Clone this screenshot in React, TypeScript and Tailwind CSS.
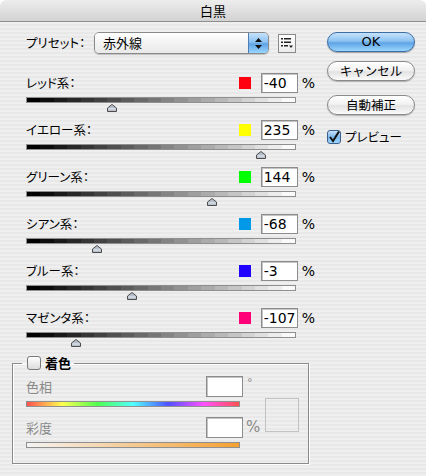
import React from 'react';

const jp = "font-['Noto_Sans_CJK_JP','Noto_Sans',sans-serif]";
const num = "font-['DejaVu_Sans','Noto_Sans_CJK_JP',sans-serif]";

const channels = [
  { label: 'レッド系：', color: 'bg-[#ff0010]', value: -40 },
  { label: 'イエロー系：', color: 'bg-[#ffff00]', value: 235 },
  { label: 'グリーン系：', color: 'bg-[#00ff00]', value: 144 },
  { label: 'シアン系：', color: 'bg-[#0099e8]', value: -68 },
  { label: 'ブルー系：', color: 'bg-[#2000ff]', value: -3 },
  { label: 'マゼンタ系：', color: 'bg-[#ff0078]', value: -107 },
];

const steps = Array.from({ length: 20 }, (_, i) => {
  const g = Math.round((i * 250) / 19);
  return `rgb(${g},${g},${g})`;
});

const Thumb = ({ left }: { left: number }) => (
  <svg
    width="10"
    height="8"
    viewBox="0 0 10 8"
    className="absolute top-[7px]"
    style={{ left }}
  >
    <path d="M5 0.5 L9.5 4 L9.5 7.5 L0.5 7.5 L0.5 4 Z" fill="#b7bfcb" stroke="#4d4d4d" strokeWidth="1" />
    <path d="M1.5 5 L8.5 5" stroke="#e8ecf2" strokeWidth="1" />
  </svg>
);

const ChannelRow = ({ label, color, value }: { label: string; color: string; value: number }) => {
  const center = ((value + 200) / 500) * 270;
  return (
    <div className="h-[47px] flex flex-col">
      <div className="h-[20px] flex items-center">
        <span className={`flex-1 text-[12.5px] text-black ${jp} [font-feature-settings:'palt']`}>{label}</span>
        <div className={`w-[12px] h-[12px] ${color}`} />
        <div
          className={`ml-[10px] w-[37px] h-[20px] bg-white border border-[#8c8c8c] shadow-[inset_1px_1px_0_#c4c4c4] flex items-center pl-[2px] text-[14px] text-black ${num}`}
        >
          {value}
        </div>
        <span className={`ml-[4px] text-[14px] text-black ${num}`}>%</span>
      </div>
      <div className="relative mt-[4px] w-[270px]">
        <div className="h-[6px] border border-[#8f8f8f] flex">
          {steps.map((c, i) => (
            <div key={i} className="flex-1" style={{ background: c }} />
          ))}
        </div>
        <Thumb left={center - 5} />
      </div>
    </div>
  );
};

const AquaButton = ({ children, primary }: { children: React.ReactNode; primary?: boolean }) => (
  <div
    className={
      primary
        ? `w-[88px] h-[20px] rounded-full border border-[#3c6ea6] bg-[linear-gradient(180deg,#c6e2fb_0%,#8cc2f2_45%,#5ea3e4_55%,#9ad6ff_100%)] shadow-[0_1px_1px_rgba(0,0,0,0.3)] flex items-center justify-center text-[13px] text-black ${num}`
        : `w-[88px] h-[20px] rounded-full border border-[#8a8a8a] bg-[linear-gradient(180deg,#ffffff_0%,#f2f2f2_45%,#e2e2e2_55%,#fbfbfb_100%)] shadow-[0_1px_1px_rgba(0,0,0,0.25)] flex items-center justify-center text-[12.5px] text-black ${jp}`
    }
  >
    {children}
  </div>
);

export default function App() {
  return (
    <div className="w-[426px] h-[476px] bg-white flex flex-col overflow-hidden">
      <div className="h-[22px] rounded-t-[6px] border-b border-[#8e8e8e] bg-[linear-gradient(180deg,#ededed_0%,#e0e0e0_50%,#d2d2d2_100%)] flex items-center justify-center">
        <span className={`text-[13px] text-black ${jp}`}>白黒</span>
      </div>
      <div className="flex-1 flex bg-[repeating-linear-gradient(180deg,#efefef_0px,#efefef_2px,#e8e8e8_2px,#e8e8e8_4px)]">
        <div className="w-[315px] pl-[12px] flex flex-col">
          <div className="pl-[14px]">
            <div className="mt-[10px] h-[22px] flex items-center">
              <span className={`w-[68px] text-[12.5px] text-black ${jp} [font-feature-settings:'palt']`}>プリセット：</span>
              <div className="w-[175px] h-[22px] rounded-[5px] border border-[#8a8a8a] shadow-[0_1px_1px_rgba(0,0,0,0.2)] flex overflow-hidden">
                <div className={`flex-1 bg-[linear-gradient(180deg,#ffffff_0%,#f3f3f3_50%,#e9e9e9_100%)] flex items-center pl-[8px] text-[13px] text-black ${jp}`}>
                  赤外線
                </div>
                <div className="w-[20px] border-l border-[#4e7db5] bg-[linear-gradient(180deg,#c6e2fb_0%,#8cc2f2_45%,#5ea3e4_55%,#9ad6ff_100%)] flex flex-col items-center justify-center gap-[3px]">
                  <svg width="7" height="4" viewBox="0 0 7 4"><path d="M3.5 0 L7 4 L0 4 Z" fill="#111" /></svg>
                  <svg width="7" height="4" viewBox="0 0 7 4"><path d="M0 0 L7 0 L3.5 4 Z" fill="#111" /></svg>
                </div>
              </div>
              <div className="ml-[9px] w-[18px] h-[19px] border border-[#8a8a8a] bg-[linear-gradient(180deg,#ffffff_0%,#ececec_100%)] flex items-center justify-center">
                <svg width="14" height="12" viewBox="0 0 14 12">
                  <rect x="1" y="1" width="2" height="1.5" fill="#222" />
                  <rect x="4" y="1" width="7" height="1.5" fill="#222" />
                  <rect x="1" y="4.5" width="2" height="1.5" fill="#222" />
                  <rect x="4" y="4.5" width="7" height="1.5" fill="#222" />
                  <rect x="1" y="8" width="2" height="1.5" fill="#222" />
                  <rect x="4" y="8" width="4" height="1.5" fill="#222" />
                  <path d="M9 8.5 L13 8.5 L11 11 Z" fill="#222" />
                </svg>
              </div>
            </div>
            <div className="mt-[19px] flex flex-col">
              {channels.map((c) => (
                <ChannelRow key={c.label} {...c} />
              ))}
            </div>
          </div>
          <fieldset className="mt-[1px] w-[297px] border border-[#8a8a8a] shadow-[1px_1px_0_#ffffff,inset_1px_1px_0_#ffffff] pl-[13px] pb-[15px]">
            <legend className="-ml-[4px] pl-[5px] pr-[3px] h-[14px] flex items-center gap-[4px]">
              <span className="w-[14px] h-[14px] rounded-[3px] border border-[#7a7a7a] bg-[linear-gradient(180deg,#ffffff_0%,#ececec_50%,#dcdcdc_100%)]" />
              <span className={`text-[13px] leading-[14px] font-bold text-black ${jp}`}>着色</span>
            </legend>
            <div className="flex">
              <div className="w-[234px] flex flex-col pt-[6px]">
                <div className="h-[21px] flex items-center">
                  <span className={`flex-1 text-[13px] text-[#8a8a8a] ${jp}`}>色相</span>
                  <div className="w-[37px] h-[21px] bg-white border border-[#8c8c8c] shadow-[inset_1px_1px_0_#c4c4c4]" />
                  <span className={`ml-[4px] w-[13px] self-start text-[11px] leading-[14px] text-[#8a8a8a] ${num}`}>°</span>
                </div>
                <div className="mt-[4px] w-[214px] h-[6px] border border-[#8f8f8f] bg-[linear-gradient(90deg,#ff5050,#ffff50,#50ff50,#50ffff,#5050ff,#ff50ff,#ff5050)]" />
                <div className="mt-[10px] h-[21px] flex items-center">
                  <span className={`flex-1 text-[13px] text-[#8a8a8a] ${jp}`}>彩度</span>
                  <div className="w-[37px] h-[21px] bg-white border border-[#8c8c8c] shadow-[inset_1px_1px_0_#c4c4c4]" />
                  <span className={`ml-[3px] w-[14px] text-[15px] text-[#8a8a8a] ${num}`}>%</span>
                </div>
                <div className="mt-[4px] w-[214px] h-[6px] border border-[#8f8f8f] bg-[linear-gradient(90deg,#f4f4f4,#f5a030)]" />
              </div>
              <div className="ml-[5px] mt-[28px] w-[34px] h-[34px] border border-[#c2c2c2]" />
            </div>
          </fieldset>
        </div>
        <div className="pl-[12px] pt-[10px] flex flex-col">
          <AquaButton primary>OK</AquaButton>
          <div className="mt-[9px]">
            <AquaButton>キャンセル</AquaButton>
          </div>
          <div className="mt-[14px]">
            <AquaButton>自動補正</AquaButton>
          </div>
          <div className="mt-[13px] flex items-center gap-[4px]">
            <span className="w-[14px] h-[14px] rounded-[3px] border border-[#3d5f8c] bg-[linear-gradient(180deg,#c6e2fb_0%,#7cb6ec_50%,#9ad6ff_100%)] flex items-center justify-center">
              <svg width="12" height="12" viewBox="0 0 12 12">
                <path d="M2 6 L5 10 L11 0.5" fill="none" stroke="#111" strokeWidth="2" />
              </svg>
            </span>
            <span className={`text-[12.5px] text-black ${jp} [font-feature-settings:'palt']`}>プレビュー</span>
          </div>
        </div>
      </div>
    </div>
  );
}
